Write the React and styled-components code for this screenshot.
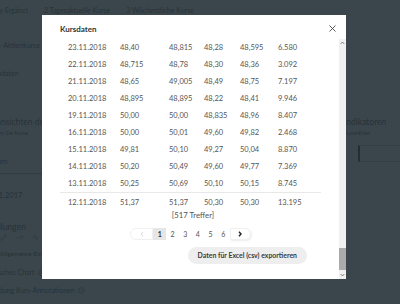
import React from 'react';
import styled, { createGlobalStyle } from 'styled-components';
import { Info, Pencil, TrendingUp, Activity } from 'lucide-react';

const GlobalStyle = createGlobalStyle`
  html, body { margin: 0; padding: 0; }
  body {
    font-family: Lato, "Noto Sans", sans-serif;
    background: #fff;
    overflow: hidden;
  }
`;

const rows = [
  ['23.11.2018', '48,40', '48,815', '48,28', '48,595', '6.580'],
  ['22.11.2018', '48,715', '48,78', '48,30', '48,36', '3.092'],
  ['21.11.2018', '48,65', '49,005', '48,49', '48,75', '7.197'],
  ['20.11.2018', '48,895', '48,895', '48,22', '48,41', '9.946'],
  ['19.11.2018', '50,00', '50,00', '48,835', '48,96', '8.407'],
  ['16.11.2018', '50,00', '50,01', '49,60', '49,82', '2.468'],
  ['15.11.2018', '49,81', '50,10', '49,27', '50,04', '8.870'],
  ['14.11.2018', '50,20', '50,49', '49,60', '49,77', '7.369'],
  ['13.11.2018', '50,25', '50,69', '50,10', '50,15', '8.745'],
  ['12.11.2018', '51,37', '51,37', '50,30', '50,30', '13.195'],
];

/* ---------- page behind the dialog ---------- */

const Page = styled.div`
  width: 400px;
  height: 304px;
  overflow: hidden;
  background: #fff;
  color: #2e2e2e;
`;

const Tabs = styled.div`
  height: 20px;
  display: flex;
  align-items: center;
  gap: 16px;
  margin-left: -22px;
  font-size: 7px;
`;

const Columns = styled.div`
  display: grid;
  grid-template-columns: 368px 80px;
  margin-left: -24px;
`;

const Side = styled.div`
  display: flex;
  flex-direction: column;
`;

const Item = styled.div`
  margin-top: ${({ $mt }) => $mt}px;
  padding-left: ${({ $indent }) => $indent || 0}px;
  height: ${({ $h }) => $h || 12}px;
  line-height: ${({ $h }) => $h || 12}px;
  font-size: ${({ $size }) => $size || 7}px;
  white-space: nowrap;
  display: flex;
  align-items: center;
  gap: 3px;
`;

const Underline = styled.div`
  margin-top: 6px;
  height: 1px;
  width: 70px;
  background: #999;
`;

const IconRow = styled.div`
  height: 10px;
  padding-left: 24px;
  display: flex;
  align-items: center;
  gap: 9px;
`;

const InputBox = styled.div`
  margin-top: 8px;
  height: 15px;
  width: 60px;
  margin-left: 14px;
  border: 1px solid #bbb;
  border-left: 2px solid #111;
`;

/* ---------- dialog ---------- */

const Overlay = styled.div`
  position: fixed;
  inset: 0;
  background: rgba(38, 50, 56, 0.9);
  padding: 15px 0 0 42px;
`;

const Modal = styled.div`
  width: 304px;
  height: 264px;
  background: #fff;
  display: flex;
  flex-direction: column;
`;

const Header = styled.div`
  height: 20px;
  padding: 4px 10px 0 18px;
  display: flex;
  align-items: center;
  justify-content: space-between;
`;

const Title = styled.div`
  font-size: 8px;
  font-weight: 700;
  color: #333;
`;

const Close = styled.button`
  border: 0;
  padding: 0;
  background: none;
  width: 8px;
  height: 8px;
  display: flex;
  align-items: center;
  justify-content: center;
  margin-top: -2px;
`;

const Body = styled.div`
  flex: 1;
  display: flex;
`;

const Content = styled.div`
  flex: 1;
  padding: 0 18px 15px;
  display: flex;
  flex-direction: column;
`;

const Row = styled.div`
  display: grid;
  grid-template-columns: 52px 49px 35px 36px 38px 51px;
  align-items: center;
  height: ${({ $last }) => ($last ? 19 : 17)}px;
  border-bottom: ${({ $divider }) => ($divider ? '1.5px solid #e8e8e8' : '0')};
  font-size: 7.5px;
  color: #555;
`;

const Cell = styled.div`
  padding-left: 8px;
  white-space: nowrap;
`;

const Hits = styled.div`
  text-align: center;
  padding-left: 5px;
  font-size: 7.8px;
  line-height: 7px;
  color: #555;
`;

const Pager = styled.div`
  margin-top: 8.5px;
  height: 12px;
  display: flex;
  justify-content: center;
  align-items: stretch;
`;

const PageEnd = styled.div`
  width: ${({ $next }) => ($next ? 21 : 23)}px;
  border-radius: ${({ $next }) => ($next ? '0 6px 6px 0' : '6px 0 0 6px')};
  border: 1px solid #f0f0f0;
  box-shadow: ${({ $next }) => ($next ? '1px 1px 2px rgba(0,0,0,0.08)' : 'none')};
  box-sizing: border-box;
  display: flex;
  align-items: center;
  justify-content: center;
`;

const PageNum = styled.div`
  width: 12.7px;
  display: flex;
  align-items: center;
  justify-content: center;
  font-size: 7px;
  font-weight: ${({ $active }) => ($active ? 700 : 400)};
  background: ${({ $active }) => ($active ? '#e6e6e6' : 'transparent')};
  color: ${({ $active }) => ($active ? '#333' : '#555')};
`;

const Actions = styled.div`
  margin-top: 7px;
  display: flex;
  justify-content: flex-end;
  padding-right: 14px;
`;

const ExportButton = styled.button`
  height: 17px;
  padding: 0 10px;
  border: 0;
  border-radius: 9px;
  background: #eeeeee;
  font-family: Lato, "Noto Sans", sans-serif;
  font-size: 6.9px;
  font-weight: 700;
  color: #3a3a3a;
  white-space: nowrap;
`;

const ScrollBar = styled.div`
  width: 7px;
  background: #f1f1f1;
  display: flex;
  flex-direction: column;
`;

const ScrollArrow = styled.div`
  height: ${({ $h }) => $h}px;
  display: flex;
  align-items: center;
  justify-content: center;
`;

const ScrollSpace = styled.div`
  flex: 1;
`;

const Thumb = styled.div`
  height: 22px;
  background: #ababab;
`;

const Chevron = ({ down }) => (
  <svg width="5" height="4" viewBox="0 0 5 4">
    <path
      d={down ? 'M0.8 1.2 L2.5 2.9 L4.2 1.2' : 'M0.8 2.8 L2.5 1.1 L4.2 2.8'}
      fill="none"
      stroke="#6f6f6f"
      strokeWidth="1"
    />
  </svg>
);

const PagerArrow = ({ next }) => (
  <svg width="4" height="6" viewBox="0 0 4 6">
    <path
      d={next ? 'M1 0.8 L3 3 L1 5.2' : 'M3 0.8 L1 3 L3 5.2'}
      fill="none"
      stroke={next ? '#222' : '#d8d8d8'}
      strokeWidth={next ? 1.4 : 1}
    />
  </svg>
);

const App = () => {
  return (
    <>
      <GlobalStyle />
      <Page>
        <Tabs>
          <span>Intraday Ergänzt</span>
          <span>2 Tagesaktuelle Kurse</span>
          <span>3 Wöchentliche Kurse</span>
        </Tabs>
        <Columns>
          <Side>
            <Item $mt={19}>Echtzeit-Aktienkurse im Vergleich</Item>
            <Item $mt={16} $indent={4}>Stammdaten</Item>
            <Item $mt={37} $size={8.5}>Chartansichten des Wertpapiers</Item>
            <Item $mt={1} $h={8} $size={5.5}>Vergleichen Sie Kurse</Item>
            <Item $mt={18} $size={8}>Zeitraum</Item>
            <Underline />
            <Item $mt={16} $indent={8} $size={7.5}>01.01.2017</Item>
            <Item $mt={20} $h={10} $size={8.5}>Einstellungen</Item>
            <IconRow>
              <Pencil size={7} strokeWidth={1.5} />
              <TrendingUp size={7} strokeWidth={1.5} />
              <Activity size={7} strokeWidth={1.5} />
            </IconRow>
            <Item $mt={6} $indent={24} $size={6.5}>Allgemeine Einstellungen</Item>
            <Item $mt={6} $indent={2} $size={7}>
              Historisches Chart <Info size={7} strokeWidth={2} />
            </Item>
            <Item $mt={6} $size={7}>
              Einblendung Kurs-Annotationen <Info size={7} strokeWidth={2} />
            </Item>
          </Side>
          <Side>
            <Item $mt={96} $size={8.5}>Indikatoren</Item>
            <Item $mt={1} $h={8} $size={5.5}>Auswählen</Item>
            <InputBox />
          </Side>
        </Columns>
      </Page>

      <Overlay>
        <Modal>
          <Header>
            <Title>Kursdaten</Title>
            <Close aria-label="Schließen">
              <svg width="7" height="7" viewBox="0 0 7 7">
                <path d="M0.5 0.5 L6.5 6.5 M6.5 0.5 L0.5 6.5" stroke="#444" strokeWidth="0.9" />
              </svg>
            </Close>
          </Header>
          <Body>
            <Content>
              {rows.map((row, i) => (
                <Row key={row[0]} $divider={i === rows.length - 2} $last={i === rows.length - 1}>
                  {row.map((value, j) => (
                    <Cell key={j}>{value}</Cell>
                  ))}
                </Row>
              ))}
              <Hits>[517 Treffer]</Hits>
              <Pager>
                <PageEnd><PagerArrow /></PageEnd>
                {[1, 2, 3, 4, 5, 6].map((n) => (
                  <PageNum key={n} $active={n === 1}>{n}</PageNum>
                ))}
                <PageEnd $next><PagerArrow next /></PageEnd>
              </Pager>
              <Actions>
                <ExportButton>Daten für Excel (csv) exportieren</ExportButton>
              </Actions>
            </Content>
            <ScrollBar>
              <ScrollArrow $h={8}><Chevron /></ScrollArrow>
              <ScrollSpace />
              <Thumb />
              <ScrollArrow $h={9}><Chevron down /></ScrollArrow>
            </ScrollBar>
          </Body>
        </Modal>
      </Overlay>
    </>
  );
};

export default App;
